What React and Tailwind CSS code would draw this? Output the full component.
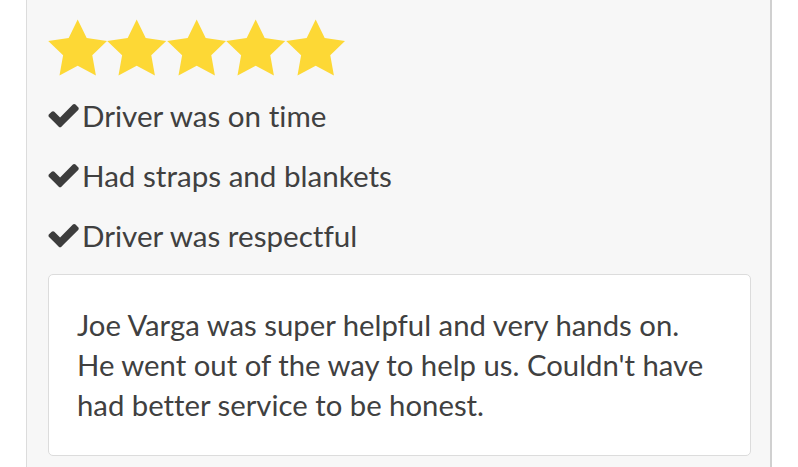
import React from "react";

function Star() {
  return (
    <svg width="59.4" height="57" viewBox="0 0 24 23.2" className="shrink-0">
      <path
        fill="#fdd835"
        d="M12 .2l3.668 7.568 8.332 1.151-6.064 5.828 1.48 8.279-7.416-3.967-7.417 3.967 1.481-8.279-6.064-5.828 8.332-1.151z"
      />
    </svg>
  );
}

function Check() {
  return (
    <svg width="32" height="26" viewBox="96 320 1640 1250" className="shrink-0">
      <path
        fill="#3d3d3d"
        d="M1671 566q0 40-28 68l-724 724-136 136q-28 28-68 28t-68-28l-136-136-362-362q-28-28-28-68t28-68l136-136q28-28 68-28t68 28l294 295 656-657q28-28 68-28t68 28l136 136q28 28 28 68z"
      />
    </svg>
  );
}

const items = ["Driver was on time", "Had straps and blankets", "Driver was respectful"];

export default function App() {
  return (
    <div
      className="w-full h-[467px] overflow-hidden bg-white [font-variant-ligatures:none]"
      style={{ fontFamily: "Lato, 'Open Sans', sans-serif" }}
    >
      <div className="ml-[26px] w-[746px] h-full border-l border-l-[#dcdcdc] border-r-2 border-r-[#d0d0d0] bg-[#f7f7f7] pl-[21px] pr-[19px] pt-[19px]">
        <div className="flex h-[57px]">
          <Star />
          <Star />
          <Star />
          <Star />
          <Star />
        </div>
        <div className="mt-[10px] flex flex-col">
          {items.map((t) => (
            <div key={t} className="flex h-[60px] items-center gap-[2px] text-[29.6px] text-[#404040]">
              <Check />
              <span className="leading-none">{t}</span>
            </div>
          ))}
        </div>
        <div className="mt-[8px] rounded-[5px] border border-[#dcdcdc] bg-white px-[28px] pt-[30px] pb-[30px] text-[29.3px] leading-[40px] text-[#404040]">
          Joe Varga was super helpful and very hands on.
          <br />
          He went out of the way to help us. Couldn't have
          <br />
          had better service to be honest.
        </div>
      </div>
    </div>
  );
}
